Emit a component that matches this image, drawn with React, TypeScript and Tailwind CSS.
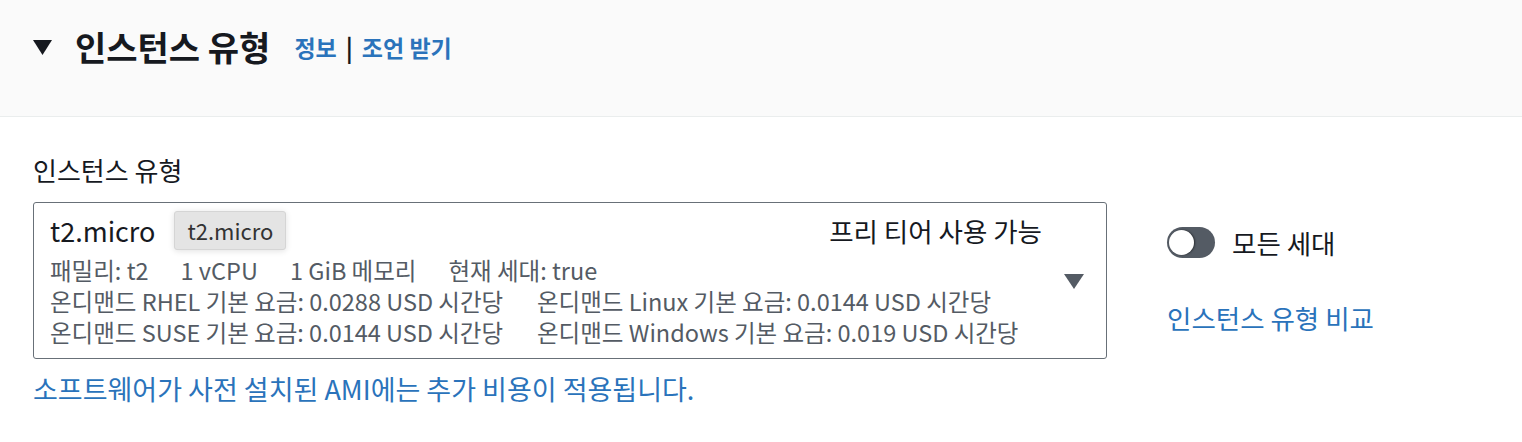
import React from "react";

const font = { fontFamily: '"Noto Sans CJK KR", "Noto Sans", sans-serif' };

const details = ["패밀리: t2", "1 vCPU", "1 GiB 메모리", "현재 세대: true"];

const prices = [
  ["온디맨드 RHEL 기본 요금: 0.0288 USD 시간당", "온디맨드 Linux 기본 요금: 0.0144 USD 시간당"],
  ["온디맨드 SUSE 기본 요금: 0.0144 USD 시간당", "온디맨드 Windows 기본 요금: 0.019 USD 시간당"],
];

const Toggle = () => (
  <div className="relative w-[48px] h-[31px] rounded-full bg-[#545b64]">
    <div className="absolute left-[2px] top-[3px] w-[25px] h-[25px] rounded-full bg-white shadow-[1px_0_2px_rgba(0,0,0,0.5)]" />
  </div>
);

const InstanceTypeSelect = () => (
  <div className="w-[1074px] border border-[#687078] rounded-[3px] bg-white pl-[16px] pr-[22px] pt-[8px] pb-[10px] flex items-center">
    <div className="flex-1">
      <div className="flex items-center h-[39px]">
        <span className="text-[27px] leading-[32px] text-[#16191f]">t2.micro</span>
        <span className="ml-[19px] h-[39px] px-[12px] flex items-center rounded-[3px] bg-[#e4e4e4] border border-[#d5d5d5] shadow-[0_1px_6px_rgba(0,0,0,0.12)] text-[22px] text-[#333]">
          t2.micro
        </span>
        <span className="ml-auto mr-[22px] text-[26.5px] leading-[32px] text-[#16191f]">프리 티어 사용 가능</span>
      </div>
      <div className="mt-[5px] text-[23.5px] leading-[31px] text-[#545b64]">
        <div className="flex gap-[32px]">
          {details.map((d) => (
            <span key={d}>{d}</span>
          ))}
        </div>
        {prices.map((row, i) => (
          <div key={i} className="flex">
            <span className="w-[487px]">{row[0]}</span>
            <span>{row[1]}</span>
          </div>
        ))}
      </div>
    </div>
    <svg width="20" height="15" viewBox="0 0 20 15" className="mt-[4px]">
      <path d="M0 0 H20 L10 15 Z" fill="#545b64" />
    </svg>
  </div>
);

export default function App() {
  return (
    <div className="w-[1522px] h-[442px] bg-white overflow-hidden" style={font}>
      <div className="h-[117px] bg-[#fafafa] border-b border-[#eaeded]">
        <div className="h-[94px] pl-[33px] flex items-center">
          <svg width="19" height="15" viewBox="0 0 19 15">
            <path d="M0 0 H19 L9.5 15 Z" fill="#16191f" />
          </svg>
          <h2 className="ml-[23px] text-[34px] leading-[40px] font-bold text-[#16191f]">인스턴스 유형</h2>
          <span className="ml-[24px] text-[23px] font-bold text-[#2a73bb]">정보</span>
          <span className="mx-[9px] text-[24px] font-bold text-[#16191f]">|</span>
          <span className="text-[23px] font-bold text-[#2a73bb]">조언 받기</span>
        </div>
      </div>
      <div className="pl-[33px] pt-[38px] flex">
        <div>
          <div className="text-[26px] leading-[30px] text-[#16191f]">인스턴스 유형</div>
          <div className="mt-[17px]">
            <InstanceTypeSelect />
          </div>
          <div className="mt-[15px] text-[27px] leading-[30px] text-[#2a73bb]">
            소프트웨어가 사전 설치된 AMI에는 추가 비용이 적용됩니다.
          </div>
        </div>
        <div className="ml-[60px] pt-[72px] flex flex-col">
          <div className="flex items-center gap-[17px]">
            <Toggle />
            <span className="text-[26.5px] leading-[30px] text-[#16191f]">모든 세대</span>
          </div>
          <div className="mt-[45px] text-[26.5px] leading-[30px] text-[#2a73bb]">인스턴스 유형 비교</div>
        </div>
      </div>
    </div>
  );
}
